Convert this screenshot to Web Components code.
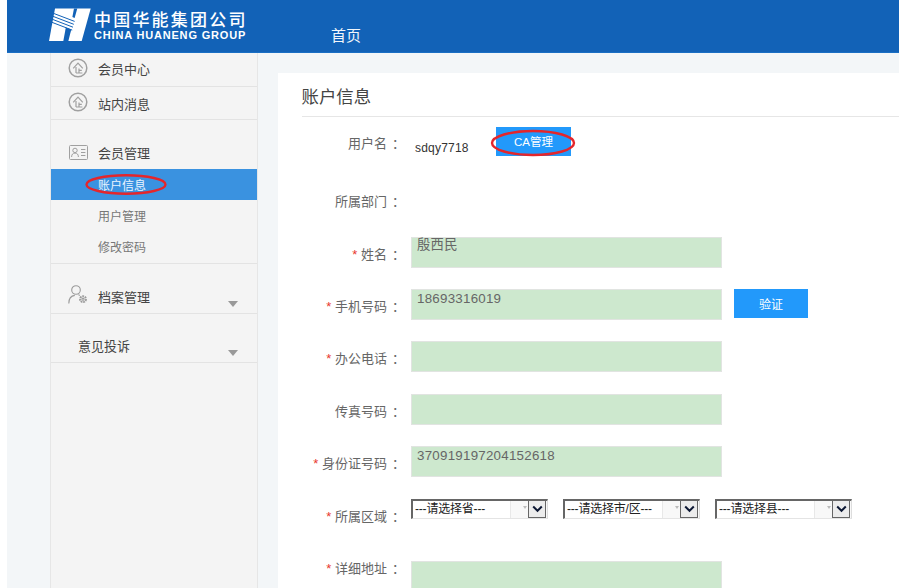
<!DOCTYPE html>
<html lang="zh">
<head>
<meta charset="utf-8">
<title>账户信息</title>
<style>
  html, body { margin: 0; padding: 0; background: #fff; }
  body { font-family: "Liberation Sans", "Noto Sans CJK SC", sans-serif; overflow: hidden; height: 588px; }
</style>
</head>
<body>
<hn-page>
  <hn-header></hn-header>
  <hn-sidebar></hn-sidebar>
  <hn-account></hn-account>
</hn-page>

<script>
const FONT = '"Liberation Sans", "Noto Sans CJK SC", sans-serif';

class HnPage extends HTMLElement {
    constructor() {
        super();
        this.attachShadow({ mode: 'open' });
        this.shadowRoot.innerHTML = `
            <style>
                :host { display: block; width: 892px; height: 588px; margin-left: 7px; background: #f3f6f8; overflow: hidden; font-family: ${FONT}; }
                .body { display: flex; padding-left: 43px; height: 535px; }
            </style>
            <slot name="top"></slot>
            <div class="body"><slot name="side"></slot><slot name="main"></slot></div>
        `;
    }
    connectedCallback() {
        this.querySelector('hn-header').slot = 'top';
        this.querySelector('hn-sidebar').slot = 'side';
        this.querySelector('hn-account').slot = 'main';
    }
}

class HnHeader extends HTMLElement {
    constructor() {
        super();
        this.attachShadow({ mode: 'open' });
        this.shadowRoot.innerHTML = `
            <style>
                :host { display: flex; height: 53px; background: #1262b7; color: #fff; box-sizing: border-box; border-bottom: 1px solid #1a6fc4; padding-left: 42px; }
                svg { width: 42px; height: 34px; margin-top: 8px; flex: none; }
                .brand { margin-left: 3px; width: 152px; flex: none; }
                .cn { font-size: 17px; font-weight: 500; letter-spacing: 2.2px; line-height: 18px; margin-top: 12px; white-space: nowrap; }
                .en { font-size: 11px; font-weight: 700; letter-spacing: .82px; line-height: 12px; margin-top: -1px; white-space: nowrap; }
                .nav { margin-left: 85px; font-size: 15px; line-height: 20px; margin-top: 26px; color: #f2f6fb; }
            </style>
            <svg viewBox="0 0 42 34" aria-hidden="true">
                <path fill="#fff" d="M6 .5H41.7L32.7 33H0Z"/>
                <g fill="#1262b7">
                    <path d="M25 .5H28.3L25.6 10 23.4 9Z"/>
                    <path d="M14.3 33.2H19.3L22.3 21.5 16.8 19.4Z"/>
                </g>
                <g stroke="#1262b7" stroke-width="1" fill="none">
                    <path d="M4.6 5.4 25.6 13.4"/>
                    <path d="M3.9 8.3 24.8 16.3"/>
                    <path d="M3.1 11.2 24 19.2"/>
                    <path d="M2.4 14.1 23.2 22.1"/>
                </g>
            </svg>
            <div class="brand">
                <div class="cn">中国华能集团公司</div>
                <div class="en">CHINA HUANENG GROUP</div>
            </div>
            <div class="nav">首页</div>
        `;
    }
}

// sidebar icons
const ICONS = {
    org: `<svg style="margin-top:-2px" width="20" height="20" viewBox="0 0 20 20" fill="none" stroke="#a0a0a0"><circle cx="10" cy="10" r="8.8" stroke-width="1.5"/><path d="M5.2 10.4 10 5.2 14.8 10.4M8 9v6M8 15h6.4M11 10.4v4.6M11 12.4h2.8" stroke-width="1.2"/></svg>`,
    card: `<svg width="19" height="15" viewBox="0 0 19 15" fill="none" stroke="#a0a0a0" stroke-width="1"><rect x=".5" y=".5" width="18" height="14" rx="1"/><circle cx="6" cy="5.4" r="2.2"/><path d="M2.6 12c0-2.8 1.4-3.9 3.4-3.9s3.4 1.1 3.4 3.9M12 4.5h4.4M12 7.5h4.4M12 10.5h4.4"/></svg>`,
    user: `<svg style="margin-top:-4px" width="20" height="19" viewBox="0 0 20 19" fill="none" stroke="#9a9a9a" stroke-width="1.1"><circle cx="8" cy="5" r="4.3"/><path d="M.8 18.4c0-4.6 2.6-7.6 6-8M10.4 9.6l1.4.9"/><circle cx="15" cy="14.2" r="3" stroke-width="1.8" stroke-dasharray="1.8 .8"/><circle cx="15" cy="14.2" r="1.1"/></svg>`
};

class HnMenuGroup extends HTMLElement {
    constructor() {
        super();
        this.attachShadow({ mode: 'open' });
        const icon = ICONS[this.getAttribute('icon')] || '';
        const arrow = this.hasAttribute('arrow') ? '<i class="arrow"></i>' : '';
        this.shadowRoot.innerHTML = `
            <style>
                :host { display: flex; align-items: center; position: relative; box-sizing: border-box; font-size: 13px; color: #444; }
                .ic { width: 20px; display: flex; justify-content: center; margin-left: 17px; flex: none; }
                .tx { margin-left: 10px; white-space: nowrap; }
                :host([bare]) .tx { margin-left: 27px; }
                .arrow { position: absolute; left: 177px; bottom: 6px; border: 5px solid transparent; border-top: 6px solid #999; border-bottom: 0; }
            </style>
            ${icon ? `<span class="ic">${icon}</span>` : ''}
            <span class="tx"><slot></slot></span>
            ${arrow}
        `;
    }
}

class HnMenuItem extends HTMLElement {
    constructor() {
        super();
        this.attachShadow({ mode: 'open' });
        this.shadowRoot.innerHTML = `
            <style>
                :host { display: flex; align-items: center; box-sizing: border-box; height: 31.5px; padding: 0 0 1px 47px; font-size: 12px; color: #777; position: relative; }
                :host([active]) { background: #3a92e0; color: #e9f4ff; height: 31px; }
                .oval { position: absolute; left: 34px; top: 5px; width: 82px; height: 21px; }
            </style>
            <slot></slot>
            ${this.hasAttribute('active') ? '<svg class="oval" viewBox="0 0 82 21"><ellipse cx="41" cy="10.5" rx="39.5" ry="9.2" fill="none" stroke="#e4262c" stroke-width="2.4"/></svg>' : ''}
        `;
    }
}

class HnSidebar extends HTMLElement {
    constructor() {
        super();
        this.attachShadow({ mode: 'open' });
        this.shadowRoot.innerHTML = `
            <style>
                :host { display: block; width: 208px; flex: none; box-sizing: border-box; background: #f4f4f4; border-left: 1px solid #e6e6e6; border-right: 1px solid #e6e6e6; height: 535px; }
                .a { height: 34px; border-bottom: 1px solid #e3e3e3; padding-bottom: 2px; }
                .b { height: 33px; border-bottom: 1px solid #e3e3e3; }
                .g { height: 49px; padding-top: 15px; }
                .sep { border-bottom: 1px solid #e3e3e3; height: 0; }
                .h { height: 50px; border-bottom: 1px solid #e3e3e3; padding-top: 16px; }
                .h2 { height: 49px; border-bottom: 1px solid #e3e3e3; padding-top: 15px; }
            </style>
            <hn-menu-group class="a" icon="org">会员中心</hn-menu-group>
            <hn-menu-group class="b" icon="org">站内消息</hn-menu-group>
            <hn-menu-group class="g" icon="card">会员管理</hn-menu-group>
            <hn-menu-item active>账户信息</hn-menu-item>
            <hn-menu-item>用户管理</hn-menu-item>
            <hn-menu-item>修改密码</hn-menu-item>
            <div class="sep"></div>
            <hn-menu-group class="h" icon="user" arrow>档案管理</hn-menu-group>
            <hn-menu-group class="h2" bare arrow>意见投诉</hn-menu-group>
        `;
    }
}

class HnField extends HTMLElement {
    constructor() {
        super();
        this.attachShadow({ mode: 'open' });
        const star = this.hasAttribute('required') ? '<b>*</b> ' : '';
        this.shadowRoot.innerHTML = `
            <style>
                :host { display: flex; align-items: flex-start; height: 52.4px; }
                .lb { width: 104px; flex: none; text-align: right; font-size: 13px; line-height: 18px; color: #666; white-space: nowrap; padding-top: 9px; }
                .c { margin-left: 5px; }
                b { color: #e8372c; font-weight: 400; font-family: "Liberation Sans", sans-serif; }
                .ct { margin-left: 6px; display: flex; align-items: flex-start; }
            </style>
            <div class="lb">${star}${this.getAttribute('label')}<span class="c">：</span></div>
            <div class="ct"><slot></slot></div>
        `;
    }
}

class HnInput extends HTMLElement {
    constructor() {
        super();
        this.attachShadow({ mode: 'open' });
        this.shadowRoot.innerHTML = `
            <style>
                :host { display: block; box-sizing: border-box; width: 311px; height: 31px; background: #cde8ce; border: 1px solid #e1e4e1; padding: 1px 0 0 5px; font-size: 13.33px; line-height: 16px; color: #666; letter-spacing: .25px; }
            </style>
            <slot></slot>
        `;
    }
}

class HnButton extends HTMLElement {
    constructor() {
        super();
        this.attachShadow({ mode: 'open' });
        this.shadowRoot.innerHTML = `
            <style>
                :host { display: flex; align-items: center; justify-content: center; box-sizing: border-box; background: #2299fb; color: #fff; font-size: 12px; }
            </style>
            <slot></slot>
        `;
    }
}

class HnSelect extends HTMLElement {
    constructor() {
        super();
        this.attachShadow({ mode: 'open' });
        this.shadowRoot.innerHTML = `
            <style>
                :host { display: flex; box-sizing: border-box; width: 137px; height: 20px; border: 1px solid #e6e6e6; border-left: 2px solid #666; border-top: 2px solid #666; border-right-color: #ddd; border-bottom-color: #e4e4e4; background: #f8f8f8; font-size: 12px; line-height: 15px; letter-spacing: -.2px; color: #222; margin-right: 15px; }
                .v { width: 98px; flex: none; background: #fff; white-space: nowrap; padding: 1px 0 0 2px; box-sizing: border-box; height: 17px; border-right: 1px solid #e8e8e8; }
                .t { margin: 5px 0 0 auto; border: 2px solid transparent; border-top: 3px solid #bbb; border-bottom: 0; height: 0; }
                .d { margin: -1px 1px 0 1px; width: 18px; height: 18px; box-sizing: border-box; border: 1px solid #666; background: #ececec; display: flex; align-items: center; justify-content: center; flex: none; }
            </style>
            <span class="v"><slot></slot></span>
            <i class="t"></i>
            <span class="d"><svg width="11" height="8" viewBox="0 0 11 8"><path d="M1.2 1.5 5.5 5.8 9.8 1.5" fill="none" stroke="#0c1733" stroke-width="2"/></svg></span>
        `;
    }
}

class HnAccount extends HTMLElement {
    constructor() {
        super();
        this.attachShadow({ mode: 'open' });
        this.shadowRoot.innerHTML = `
            <style>
                :host { display: block; flex: 1; margin: 20px 0 0 20px; background: #fff; padding: 0 0 0 24px; font-family: ${FONT}; overflow: hidden; }
                h1 { margin: 0 0 0 -.5px; font-weight: 400; font-size: 17.4px; line-height: 24px; color: #444; padding-top: 12px; height: 31px; border-bottom: 1px solid #e6e6e6; }
                .form { padding-top: 9px; margin-left: -1px; }
                hn-field.first { height: 58.2px; }
                .user { display: flex; align-items: flex-start; position: relative; height: 60px; margin-top: 1px; }
                .name { font-size: 12px; color: #333; letter-spacing: .2px; margin: 13px 0 0 4px; width: 81px; flex: none; line-height: 16px; }
                hn-button.ca { width: 75px; height: 29px; padding-bottom: 2px; font-size: 11.5px; }
                .oval { position: absolute; left: 79px; top: 1px; width: 86px; height: 30px; }
                .tel { width: 74px; height: 29px; margin-left: 12px; }
                hn-input.cjk { padding-top: 0; line-height: 14px; }
                hn-input.addr { margin-top: 10px; }
                .selects { display: flex; }
            </style>
            <h1>账户信息</h1>
            <div class="form">
                <hn-field label="用户名" class="first">
                    <div class="user">
                        <span class="name">sdqy7718</span>
                        <hn-button class="ca">CA管理</hn-button>
                        <svg class="oval" viewBox="0 0 86 30"><ellipse cx="43" cy="15" rx="41" ry="12" fill="none" stroke="#e4262c" stroke-width="2.4"/></svg>
                    </div>
                </hn-field>
                <hn-field label="所属部门"></hn-field>
                <hn-field label="姓名" required><hn-input class="cjk">殷西民</hn-input></hn-field>
                <hn-field label="手机号码" required><hn-input>18693316019</hn-input><hn-button class="tel">验证</hn-button></hn-field>
                <hn-field label="办公电话" required><hn-input></hn-input></hn-field>
                <hn-field label="传真号码"><hn-input></hn-input></hn-field>
                <hn-field label="身份证号码" required><hn-input>370919197204152618</hn-input></hn-field>
                <hn-field label="所属区域" required>
                    <div class="selects">
                        <hn-select>---请选择省---</hn-select>
                        <hn-select>---请选择市/区---</hn-select>
                        <hn-select>---请选择县---</hn-select>
                    </div>
                </hn-field>
                <hn-field label="详细地址" required><hn-input class="addr"></hn-input></hn-field>
            </div>
        `;
    }
}

customElements.define('hn-page', HnPage);
customElements.define('hn-header', HnHeader);
customElements.define('hn-menu-group', HnMenuGroup);
customElements.define('hn-menu-item', HnMenuItem);
customElements.define('hn-sidebar', HnSidebar);
customElements.define('hn-field', HnField);
customElements.define('hn-input', HnInput);
customElements.define('hn-button', HnButton);
customElements.define('hn-select', HnSelect);
customElements.define('hn-account', HnAccount);
</script>
</body>
</html>
